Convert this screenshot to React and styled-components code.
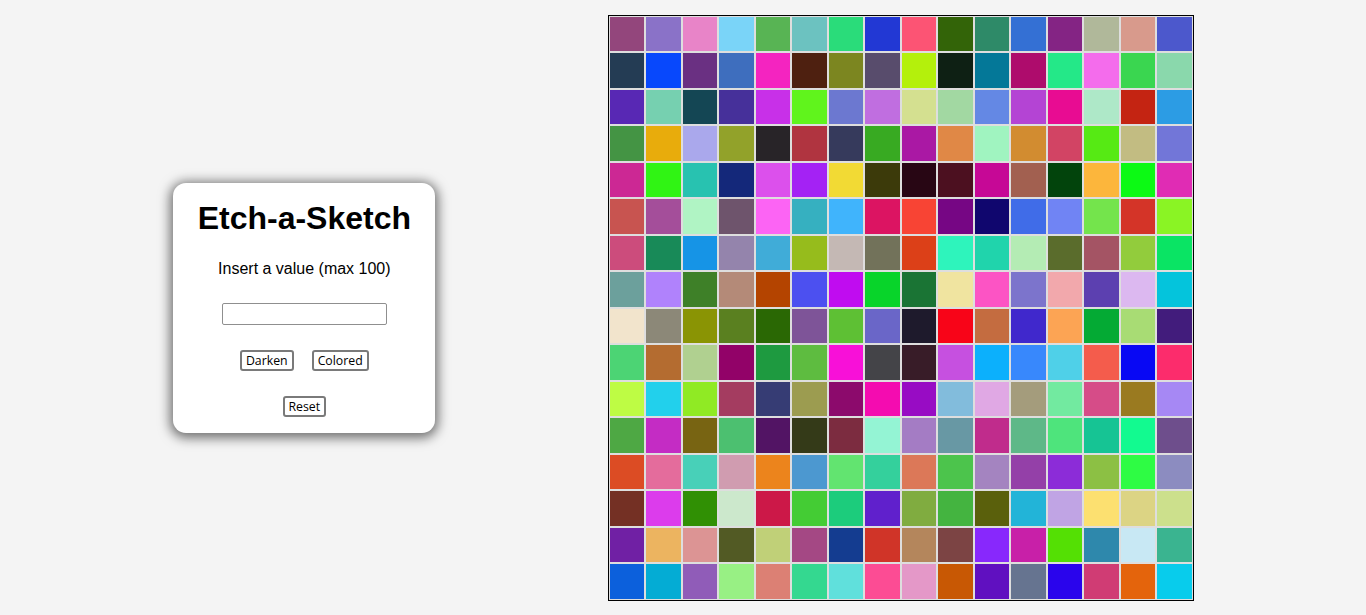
import React from 'react'
import styled, { createGlobalStyle } from 'styled-components'

const GlobalStyle = createGlobalStyle`
    html, body {
        margin: 0;
        padding: 0;
        background: #f4f4f4;
        font-family: "Liberation Sans", Arial, sans-serif;
    }
`

const colors = [
    '#93467c', '#8a72c8', '#e884c8', '#7ad4f8', '#58b454', '#6cc2c0', '#2adc7a', '#2238d4', '#fc5474', '#336408', '#2e8a68', '#3470d4', '#842484', '#b0b89a', '#d89a8c', '#4c58cc',
    '#243c54', '#0848fc', '#6a3082', '#3e6ebe', '#f424c0', '#4e2010', '#7c8620', '#584c6c', '#b4f00c', '#0e2014', '#047898', '#ae0c6c', '#24e888', '#f46cec', '#3ad650', '#8ad8ac',
    '#5828b4', '#76d0b0', '#144654', '#46309a', '#c830e8', '#60f41c', '#6c78d0', '#c06ee0', '#d4e090', '#a2d8a2', '#6488e4', '#b444d4', '#e80c92', '#aee8c8', '#c42412', '#2c9ce4',
    '#449444', '#e8ac0c', '#aaa8ec', '#92a22a', '#282428', '#b03440', '#363a5c', '#38aa22', '#aa18a4', '#e08846', '#a0f4c0', '#d28c30', '#d24464', '#56ea14', '#c2bc82', '#7276d8',
    '#cc2894', '#30f414', '#28c2b0', '#14287a', '#dc50ec', '#a422f4', '#f2da34', '#3c3a0a', '#280614', '#4c1020', '#c60896', '#a26050', '#02440c', '#fcb63c', '#0cfa14', '#e02cb4',
    '#c85450', '#a44e9a', '#b0f4c4', '#6e546c', '#fc64f4', '#36b0c0', '#40b4fc', '#dc1462', '#f84434', '#760684', '#10066e', '#406ce8', '#7084f4', '#74e44c', '#d43428', '#8af424',
    '#cc4c7c', '#188a58', '#1694e6', '#9484ac', '#40acd8', '#96bc1c', '#c4b8b4', '#72725a', '#dc4018', '#2ef4bc', '#20d4ac', '#b4ecb4', '#5a6c2c', '#a45464', '#92cc3c', '#0ae464',
    '#6ca09c', '#b082fc', '#3e8028', '#b48a78', '#b44400', '#4c50f0', '#c00cf0', '#08d42a', '#1a7434', '#f0e4a0', '#fc54c4', '#7c74cc', '#f2a8ac', '#5c40b0', '#dcb8f0', '#04c4dc',
    '#f2e4cc', '#8c8878', '#8a9404', '#5a8020', '#2a6804', '#7e5498', '#5ec034', '#6a66c8', '#1e1a2c', '#f80418', '#c46c40', '#4028cc', '#fca454', '#04aa34', '#a8dc74', '#421c7c',
    '#4cd474', '#b46c30', '#b0d090', '#920268', '#1e9a40', '#5ebc40', '#f810d8', '#444448', '#381c28', '#c650e0', '#0cb0fc', '#3888fc', '#4fd0e8', '#f45c4c', '#0808f4', '#fc2c6c',
    '#befc44', '#22d0ec', '#90ea24', '#a43c60', '#363c74', '#9c9c50', '#8c0a6c', '#f40cb0', '#980cc4', '#82bcdc', '#e0a8e4', '#a49c7c', '#72eaa0', '#d64c88', '#9a7a20', '#a688f4',
    '#4ea844', '#c42cc4', '#786412', '#4cc070', '#521464', '#343a18', '#7c2c40', '#94f4d4', '#a47cc4', '#6898a4', '#c02c8c', '#5eb888', '#4ee47c', '#16c494', '#12fa90', '#6e4e8c',
    '#dc4c24', '#e46c9c', '#48d0b8', '#d09cb0', '#ec841c', '#4c98d0', '#62e470', '#34d09c', '#dc7858', '#4cc44c', '#a484c0', '#9440a8', '#8c2cd8', '#8cc044', '#2efc44', '#8c8cc0',
    '#743024', '#dc3cec', '#309004', '#cce8cc', '#cc1848', '#44cc34', '#1ccc7c', '#6020cc', '#80ac40', '#44b440', '#5a600c', '#22b4d8', '#c0a4e4', '#fce070', '#dcd484', '#cce08c',
    '#7020a4', '#ecb460', '#dc9494', '#525a24', '#c0d078', '#a44884', '#143c90', '#d03428', '#b4865c', '#7c4444', '#8828fc', '#c820a8', '#54e004', '#2e88ac', '#c8e8f4', '#3ab490',
    '#0c60dc', '#04acd4', '#905cb8', '#98f084', '#dc8074', '#34d890', '#60e0dc', '#fc4c94', '#e498c8', '#c85804', '#6010c0', '#667490', '#2a04ec', '#d03c74', '#e4640c', '#08ccec',
]

const App = () => {
    return (
        <Page>
            <GlobalStyle />
            <Panel>
                <Title>Etch-a-Sketch</Title>
                <Label>Insert a value (max 100)</Label>
                <SizeInput type="text" />
                <ButtonRow>
                    <Button>Darken</Button>
                    <Button>Colored</Button>
                </ButtonRow>
                <Button>Reset</Button>
            </Panel>
            <Board>
                {colors.map((c, i) => (
                    <Cell key={i} color={c} />
                ))}
            </Board>
        </Page>
    )
}

export default App

const Page = styled.div`
    display: flex;
    align-items: center;
    justify-content: space-evenly;
    height: 100vh;
    padding-left: 1px;
    box-sizing: border-box;
`

const Panel = styled.div`
    display: flex;
    flex-direction: column;
    align-items: center;
    box-sizing: border-box;
    width: 262px;
    height: 250px;
    padding-top: 17px;
    background: #fff;
    border-radius: 13px;
    box-shadow: 0 2px 12px 3px rgba(0,0,0,.55);
`

const Title = styled.h1`
    margin: 0;
    font-size: 32px;
    font-weight: 700;
    line-height: 37px;
    color: #000;
`

const Label = styled.p`
    margin: 23px 0 0;
    font-size: 16px;
    line-height: 18px;
    color: #000;
`

const SizeInput = styled.input`
    box-sizing: border-box;
    width: 165px;
    height: 22px;
    margin-top: 25px;
    border: 1px solid #8f8f8f;
    border-radius: 2px;
    background: #fff;
`

const ButtonRow = styled.div`
    display: flex;
    gap: 18px;
    margin: 25px 0 25px;
`

const Button = styled.button`
    box-sizing: border-box;
    height: 21px;
    padding: 0 4px;
    background: #fff;
    border: 2px solid #7a7a7a;
    border-radius: 3px;
    font-family: "Open Sans", sans-serif;
    font-size: 12.3px;
    line-height: 17px;
    color: #000;
    cursor: pointer;
`

const Board = styled.div`
    display: grid;
    grid-template-columns: repeat(16, 1fr);
    grid-template-rows: repeat(16, 1fr);
    width: 584px;
    height: 584px;
    border: 1px solid #000;
    background: #fff;
`

const Cell = styled.div`
    box-sizing: border-box;
    border: 1px solid #dedede;
    background: ${props => props.color};
`
